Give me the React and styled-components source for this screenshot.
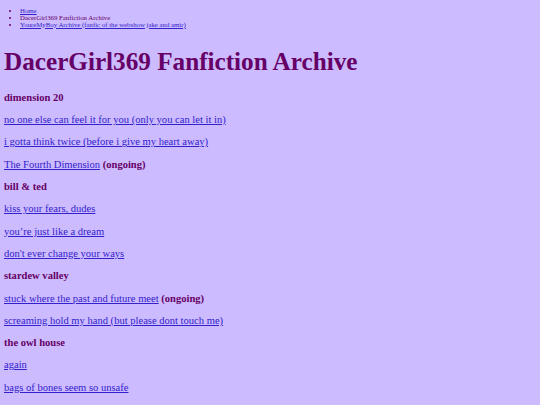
import React from "react";
import styled, { createGlobalStyle } from "styled-components";

const Global = createGlobalStyle`
  html, body { margin: 0; padding: 0; background: #ccbbff; }
  body { font-family: "Liberation Serif", "Times New Roman", serif; }
`;

const Page = styled.div`
  padding: 5px 4px;
  background: #ccbbff;
  min-height: 405px;
  box-sizing: border-box;
`;

const Crumbs = styled.ul`
  margin: 1.5px 0 0;
  padding-left: 16px;
  font-size: 6.8px;
  line-height: 7px;
  color: #660066;
  list-style: disc;
`;

const Crumb = styled.li``;

const Link = styled.a`
  color: #3322cc;
  text-decoration: underline;
`;

const Title = styled.h1`
  font-size: 25.2px;
  line-height: 28.75px;
  font-weight: bold;
  color: #660066;
  margin: 20px 0 15.6px;
`;

const Row = styled.p`
  margin: 10.3px 0;
  font-size: 10.55px;
  line-height: 12px;
  color: #660066;
`;

const Label = styled.b`
  font-weight: bold;
  color: #660066;
`;

const sections = [
  {
    name: "dimension 20",
    works: [
      { t: "no one else can feel it for you (only you can let it in)" },
      { t: "i gotta think twice (before i give my heart away)" },
      { t: "The Fourth Dimension", ongoing: true },
    ],
  },
  {
    name: "bill & ted",
    works: [
      { t: "kiss your fears, dudes" },
      { t: "you\u2019re just like a dream" },
      { t: "don't ever change your ways" },
    ],
  },
  {
    name: "stardew valley",
    works: [
      { t: "stuck where the past and future meet", ongoing: true },
      { t: "screaming hold my hand (but please dont touch me)" },
    ],
  },
  {
    name: "the owl house",
    works: [{ t: "again" }, { t: "bags of bones seem so unsafe" }],
  },
];

export default function App() {
  return (
    <>
      <Global />
      <Page>
        <Crumbs>
          <Crumb>
            <Link href="#">Home</Link>
          </Crumb>
          <Crumb>DacerGirl369 Fanfiction Archive</Crumb>
          <Crumb>
            <Link href="#">YoureMyBoy Archive (fanfic of the webshow jake and amir)</Link>
          </Crumb>
        </Crumbs>
        <Title>DacerGirl369 Fanfiction Archive</Title>
        {sections.map((s) => (
          <React.Fragment key={s.name}>
            <Row>
              <Label>{s.name}</Label>
            </Row>
            {s.works.map((w) => (
              <Row key={w.t}>
                <Link href="#">{w.t}</Link>
                {w.ongoing && <Label> (ongoing)</Label>}
              </Row>
            ))}
          </React.Fragment>
        ))}
      </Page>
    </>
  );
}
